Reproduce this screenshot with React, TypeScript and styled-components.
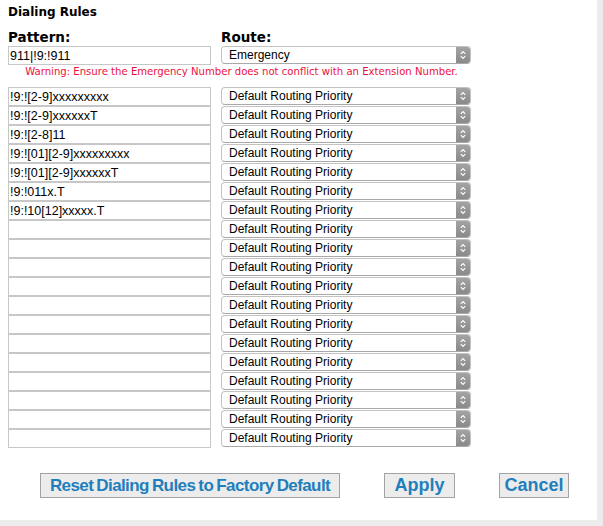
import React from 'react';
import styled, { createGlobalStyle } from 'styled-components';

const GlobalStyle = createGlobalStyle`
  html, body {
    margin: 0;
    padding: 0;
    background: #ececec;
  }
`;

const Panel = styled.div`
  width: 597px;
  height: 520px;
  box-sizing: border-box;
  background: #ffffff;
  padding: 5px 8px 0;
  font-family: 'Liberation Sans', Arial, sans-serif;
`;

const Title = styled.h2`
  margin: 0;
  font-family: 'DejaVu Sans', Verdana, sans-serif;
  font-size: 12px;
  line-height: 15px;
  font-weight: 700;
  color: #000;
`;

const Grid = styled.div`
  display: grid;
  grid-template-columns: 203px 250px;
  column-gap: 10px;
  grid-auto-rows: 19px;
  width: 463px;
`;

const HeadGrid = styled(Grid)`
  margin-top: 9px;
  grid-template-rows: 16px 19px;
  row-gap: 1px;
`;

const Label = styled.div`
  font-family: 'DejaVu Sans', Verdana, sans-serif;
  font-size: 13.5px;
  line-height: 16px;
  font-weight: 700;
  color: #000;
`;

const PatternInput = styled.input`
  box-sizing: border-box;
  width: 203px;
  height: 19px;
  margin: 0;
  padding: 0 1px;
  border: 1px solid #c7c7c7;
  outline: none;
  font-family: 'Liberation Sans', Arial, sans-serif;
  font-size: 12.5px;
  color: #000;
  background: #fff;
`;

const SelectBox = styled.div`
  box-sizing: border-box;
  display: flex;
  width: 250px;
  height: 18px;
  border: 1px solid #c3c3c3;
  border-bottom-color: #a9a9a9;
  border-radius: 4px;
  overflow: hidden;
  background: #fff;
`;

const NativeSelect = styled.select`
  flex: 1;
  min-width: 0;
  appearance: none;
  -webkit-appearance: none;
  border: none;
  outline: none;
  margin: 0;
  padding: 0 0 0 7px;
  background: transparent;
  font-family: 'Liberation Sans', Arial, sans-serif;
  font-size: 12px;
  color: #000;
`;

const ArrowCap = styled.span`
  width: 14px;
  display: flex;
  align-items: center;
  justify-content: center;
  background: linear-gradient(#a3a3a3, #8a8a8a);
`;

const Warning = styled.div`
  width: 463px;
  padding-left: 4px;
  box-sizing: border-box;
  text-align: center;
  font-family: 'DejaVu Sans', Verdana, sans-serif;
  font-size: 10.1px;
  line-height: 13px;
  color: #ec0f3d;
  margin-bottom: 9px;
`;

const ButtonRow = styled.div`
  display: flex;
  gap: 44px;
  padding-left: 32px;
  margin-top: 25px;
`;

const ActionButton = styled.button<{ $w: number; $tight?: boolean }>`
  width: ${(p) => p.$w}px;
  height: 25px;
  box-sizing: border-box;
  padding: 0;
  border: 1px solid #a3a3a3;
  background: #ececec;
  color: #1f7fbd;
  text-align: center;
  white-space: nowrap;
  font-family: 'Liberation Sans', Arial, sans-serif;
  font-weight: 700;
  font-size: ${(p) => (p.$tight ? '17px' : '18px')};
  letter-spacing: ${(p) => (p.$tight ? '-0.6px' : '0')};
  word-spacing: ${(p) => (p.$tight ? '-1px' : '0')};
  line-height: 23px;
  cursor: pointer;
`;

const Chevrons = () => (
  <svg width="8" height="12" viewBox="0 0 8 12" fill="none">
    <path d="M1.8 4.8 L4 2.6 L6.2 4.8" stroke="#fff" strokeWidth="1.2" />
    <path d="M1.8 7.2 L4 9.4 L6.2 7.2" stroke="#fff" strokeWidth="1.2" />
  </svg>
);

function RouteSelect({ value }: { value: string }) {
  return (
    <SelectBox>
      <NativeSelect defaultValue={value}>
        <option>{value}</option>
      </NativeSelect>
      <ArrowCap>
        <Chevrons />
      </ArrowCap>
    </SelectBox>
  );
}

const patterns = [
  '!9:![2-9]xxxxxxxxx',
  '!9:![2-9]xxxxxxT',
  '!9:![2-8]11',
  '!9:![01][2-9]xxxxxxxxx',
  '!9:![01][2-9]xxxxxxT',
  '!9:!011x.T',
  '!9:!10[12]xxxxx.T',
  ...Array(12).fill(''),
];

export default function App() {
  return (
    <>
      <GlobalStyle />
      <Panel>
        <Title>Dialing Rules</Title>

        <HeadGrid>
          <Label>Pattern:</Label>
          <Label>Route:</Label>
          <PatternInput defaultValue="911|!9:!911" />
          <RouteSelect value="Emergency" />
        </HeadGrid>

        <Warning>
          Warning: Ensure the Emergency Number does not conflict with an Extension Number.
        </Warning>

        <Grid>
          {patterns.map((p, i) => (
            <React.Fragment key={i}>
              <PatternInput defaultValue={p} />
              <RouteSelect value="Default Routing Priority" />
            </React.Fragment>
          ))}
        </Grid>

        <ButtonRow>
          <ActionButton $w={300} $tight>
            Reset Dialing Rules to Factory Default
          </ActionButton>
          <ActionButton $w={71}>Apply</ActionButton>
          <ActionButton $w={70}>Cancel</ActionButton>
        </ButtonRow>
      </Panel>
    </>
  );
}
